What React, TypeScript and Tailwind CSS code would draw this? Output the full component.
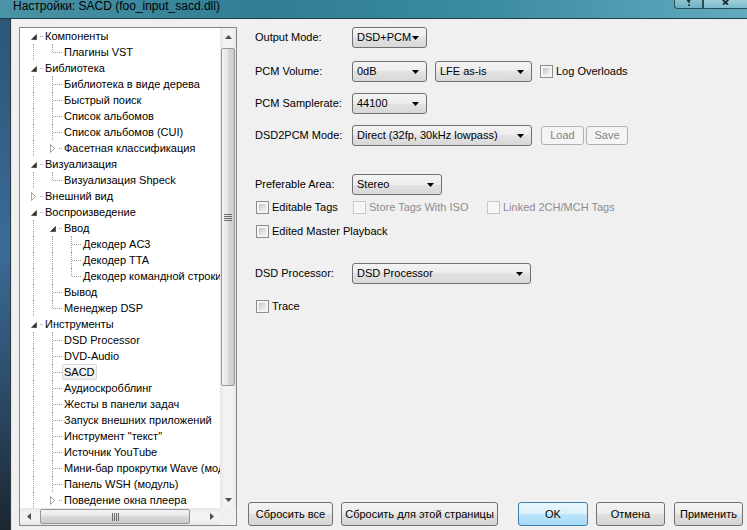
import React from 'react';

type Item = { t: string; l: number; e?: 'o' | 'c'; sel?: boolean };

const items: Item[] = [
  { t: 'Компоненты', l: 0, e: 'o' },
  { t: 'Плагины VST', l: 1 },
  { t: 'Библиотека', l: 0, e: 'o' },
  { t: 'Библиотека в виде дерева', l: 1 },
  { t: 'Быстрый поиск', l: 1 },
  { t: 'Список альбомов', l: 1 },
  { t: 'Список альбомов (CUI)', l: 1 },
  { t: 'Фасетная классификация', l: 1, e: 'c' },
  { t: 'Визуализация', l: 0, e: 'o' },
  { t: 'Визуализация Shpeck', l: 1 },
  { t: 'Внешний вид', l: 0, e: 'c' },
  { t: 'Воспроизведение', l: 0, e: 'o' },
  { t: 'Ввод', l: 1, e: 'o' },
  { t: 'Декодер AC3', l: 2 },
  { t: 'Декодер TTA', l: 2 },
  { t: 'Декодер командной строки', l: 2 },
  { t: 'Вывод', l: 1 },
  { t: 'Менеджер DSP', l: 1 },
  { t: 'Инструменты', l: 0, e: 'o' },
  { t: 'DSD Processor', l: 1 },
  { t: 'DVD-Audio', l: 1 },
  { t: 'SACD', l: 1, sel: true },
  { t: 'Аудиоскробблинг', l: 1 },
  { t: 'Жесты в панели задач', l: 1 },
  { t: 'Запуск внешних приложений', l: 1 },
  { t: 'Инструмент "текст"', l: 1 },
  { t: 'Источник YouTube', l: 1 },
  { t: 'Мини-бар прокрутки Wave (модуль)', l: 1 },
  { t: 'Панель WSH (модуль)', l: 1 },
  { t: 'Поведение окна плеера', l: 1, e: 'c' },
];

// rows scrolled out of view still have siblings below, so guide lines keep running
const hidden: Item[] = [
  { t: '', l: 1 },
  { t: '', l: 0 },
];
const all = [...items, ...hidden];

function hasNext(i: number, level: number) {
  for (let j = i + 1; j < all.length; j++) {
    if (all[j].l < level) return false;
    if (all[j].l === level) return true;
  }
  return false;
}

function Expander({ open }: { open: boolean }) {
  return (
    <div className="absolute left-[4px] top-0 bottom-0 flex w-[11px] items-center justify-center bg-white">
      {open ? (
        <svg width="6" height="6" viewBox="0 0 6 6" className="mt-[2px]">
          <path d="M5.5 0.5V5.5H0.5Z" fill="#333" stroke="#595959" strokeWidth="1" />
        </svg>
      ) : (
        <svg width="5" height="9" viewBox="0 0 5 9">
          <path d="M0.5 0.5L4.5 4.5L0.5 8.5Z" fill="#fff" stroke="#a6a6a6" strokeWidth="1" />
        </svg>
      )}
    </div>
  );
}

function TreeRow({ item, i }: { item: Item; i: number }) {
  const cols = [];
  for (let k = 0; k <= item.l; k++) {
    const own = k === item.l;
    const cont = hasNext(i, k);
    cols.push(
      <div key={k} className="relative h-full w-[19px] shrink-0">
        {own ? (
          <>
            <div className={`absolute left-[9px] top-0 w-0 border-l border-dotted border-[#a0a0a0] ${cont ? 'bottom-0' : 'h-[8px]'}`} />
            <div className="absolute left-[10px] right-0 top-[8px] h-0 border-t border-dotted border-[#a0a0a0]" />
            {item.e && <Expander open={item.e === 'o'} />}
          </>
        ) : cont ? (
          <div className="absolute left-[9px] top-0 bottom-0 w-0 border-l border-dotted border-[#a0a0a0]" />
        ) : null}
      </div>
    );
  }
  return (
    <div className="flex h-[16px] items-center whitespace-nowrap">
      {cols}
      <span
        className={`rounded-[2px] border px-[1px] leading-[14px] ${
          item.sel ? 'border-[#d9d9d9] bg-[linear-gradient(#fafafa,#ececec)]' : 'border-transparent'
        }`}
      >
        {item.t}
      </span>
    </div>
  );
}

function Gripper({ vertical }: { vertical: boolean }) {
  return vertical ? (
    <svg width="8" height="8" viewBox="0 0 8 8">
      <path d="M0 1.5H8M0 3.5H8M0 5.5H8M0 7.5H8" stroke="#6b6b6b" strokeWidth="1" />
    </svg>
  ) : (
    <svg width="8" height="8" viewBox="0 0 8 8">
      <path d="M1.5 0V8M3.5 0V8M5.5 0V8M7.5 0V8" stroke="#6b6b6b" strokeWidth="1" />
    </svg>
  );
}

function Tree() {
  return (
    <div className="flex h-[499px] w-[218px] flex-col border border-[#828790] bg-white text-[11px] text-black">
      <div className="flex h-[480px]">
        <div className="h-full w-[200px] overflow-hidden pl-[4px]">
          {all.map((it, i) => (
            <TreeRow key={i} item={it} i={i} />
          ))}
        </div>
        <div className="flex h-full w-[16px] flex-col bg-[linear-gradient(90deg,#e6e6e6,#f2f2f2_25%,#f2f2f2_75%,#e6e6e6)]">
          <div className="flex h-[17px] items-center justify-center">
            <svg width="7" height="4" viewBox="0 0 7 4">
              <path d="M0 4H7L3.5 0Z" fill="#4d4d4d" />
            </svg>
          </div>
          <div className="mx-[1px] mt-[3px] flex h-[338px] items-center justify-center rounded-[2px] border border-[#979797] bg-[linear-gradient(90deg,#f4f4f4,#e6e6e6_45%,#d6d6d6_55%,#cccccc)]">
            <Gripper vertical />
          </div>
          <div className="mt-auto flex h-[17px] items-center justify-center">
            <svg width="7" height="4" viewBox="0 0 7 4">
              <path d="M0 0H7L3.5 4Z" fill="#4d4d4d" />
            </svg>
          </div>
        </div>
      </div>
      <div className="flex h-[17px]">
        <div className="flex w-[200px] bg-[linear-gradient(#e6e6e6,#f2f2f2_25%,#f2f2f2_75%,#e6e6e6)]">
          <div className="flex w-[17px] items-center justify-center">
            <svg width="4" height="7" viewBox="0 0 4 7">
              <path d="M4 0V7L0 3.5Z" fill="#4d4d4d" />
            </svg>
          </div>
          <div className="my-[1px] ml-[3px] flex w-[150px] items-center justify-center rounded-[2px] border border-[#979797] bg-[linear-gradient(#f4f4f4,#e6e6e6_45%,#d6d6d6_55%,#cccccc)]">
            <Gripper vertical={false} />
          </div>
          <div className="ml-auto flex w-[17px] items-center justify-center">
            <svg width="4" height="7" viewBox="0 0 4 7">
              <path d="M0 0V7L4 3.5Z" fill="#4d4d4d" />
            </svg>
          </div>
        </div>
        <div className="w-[16px] bg-[#f0f0f0]" />
      </div>
    </div>
  );
}

function Caret() {
  return (
    <svg width="7" height="4" viewBox="0 0 7 4" className="shrink-0">
      <path d="M0 0H7L3.5 4Z" fill="#000" />
    </svg>
  );
}

function Select({ className, children }: { className: string; children: React.ReactNode }) {
  return (
    <div
      className={`flex h-[21px] shrink-0 items-center justify-between rounded-[3px] border border-[#707070] bg-[linear-gradient(#f3f3f3,#ececec_50%,#e2e2e2_50%,#d8d8d8)] pl-[4px] pr-[7px] ${className}`}
    >
      <span className="whitespace-nowrap">{children}</span>
      <Caret />
    </div>
  );
}

function Check({ label, disabled }: { label: string; disabled?: boolean }) {
  return (
    <div className="flex items-center">
      <div
        className={`h-[13px] w-[13px] shrink-0 border p-[2px] ${
          disabled ? 'border-[#c6c6c6] bg-[#f8f8f8]' : 'border-[#8e8f8f] bg-[#f4f4f4]'
        }`}
      >
        <div
          className={`h-full w-full ${
            disabled ? 'bg-[#f4f4f4]' : 'bg-[linear-gradient(135deg,#c4c4c4,#e3e3e3_60%,#f2f2f2)]'
          }`}
        />
      </div>
      <span className={`ml-[3px] whitespace-nowrap ${disabled ? 'text-[#8d8d8d]' : 'text-black'}`}>{label}</span>
    </div>
  );
}

function Row({ className, label, children }: { className: string; label: string; children: React.ReactNode }) {
  return (
    <div className={`flex h-[21px] items-center ${className}`}>
      <div className="w-[97px] shrink-0 whitespace-nowrap">{label}</div>
      {children}
    </div>
  );
}

function Btn({ className, children, primary }: { className: string; children: React.ReactNode; primary?: boolean }) {
  return (
    <div
      className={`flex h-[24px] shrink-0 items-center justify-center rounded-[3px] border whitespace-nowrap ${
        primary
          ? 'border-[#3c7fb1] bg-[linear-gradient(#eaf6fd,#d9f0fc_50%,#bee6fd_50%,#a7d9f5)]'
          : 'border-[#707070] bg-[linear-gradient(#f3f3f3,#ececec_50%,#e0e0e0_50%,#d4d4d4)]'
      } ${className}`}
    >
      {children}
    </div>
  );
}

export default function App() {
  return (
    <div className="flex h-[530px] w-[747px] flex-col overflow-hidden font-['Liberation_Sans',Arial,sans-serif] text-[11px] text-black">
      <div className="flex h-[19px] shrink-0 border-b border-[#1f3d47] bg-[linear-gradient(90deg,#4b93a6,#2f7e93_35%,#3b8ba1_65%,#62abbe)]">
        <div className="ml-[13px] text-[12px] leading-[13px] text-black">Настройки: SACD (foo_input_sacd.dll)</div>
        <div className="ml-auto flex h-[9px] items-end">
          <div className="flex h-[9px] w-[29px] items-start justify-center overflow-hidden rounded-bl-[4px] border border-t-0 border-[#284c58] bg-[linear-gradient(#8fc3d0,#6fb0c2)]">
            <svg width="6" height="7" viewBox="0 0 6 7">
              <path d="M1 0.5C3 1 4.5 0 4.5 -1.5M3 1V3" stroke="#1d2f36" strokeWidth="1.6" fill="none" />
              <rect x="2.2" y="4.3" width="1.7" height="1.7" fill="#1d2f36" />
            </svg>
          </div>
          <div className="flex h-[9px] w-[44px] items-start justify-center overflow-hidden border border-t-0 border-r-0 border-[#284c58] bg-[linear-gradient(#9fd0dc,#7cbccc)]">
            <svg width="11" height="5" viewBox="0 0 11 5">
              <path d="M1 -2L5.5 2.5L10 -2M3 4.5L5.5 2.5L8 4.5" stroke="#1d2f36" strokeWidth="1.8" fill="none" />
            </svg>
          </div>
        </div>
      </div>
      <div className="flex flex-1">
        <div className="w-[10px] bg-[linear-gradient(#2c5578,#3a6b97_45%,#2e4f6e_70%,#1c2630)]" />
        <div className="w-[1px] bg-[#2a3a42]" />
        <div className="w-[1px] bg-[#dfe3e6]" />
        <div className="flex flex-1 bg-[#f0f0f0]">
          <div className="pl-[7px] pt-[8px]">
            <Tree />
          </div>
          <div className="flex flex-1 flex-col pb-[4px] pl-[11px]">
            <div className="pl-[7px]">
              <Row className="mt-[8px]" label="Output Mode:">
                <Select className="w-[75px]">DSD+PCM</Select>
              </Row>
              <Row className="mt-[13px]" label="PCM Volume:">
                <Select className="w-[75px]">0dB</Select>
                <Select className="ml-[8px] w-[97px]">LFE as-is</Select>
                <div className="ml-[8px]">
                  <Check label="Log Overloads" />
                </div>
              </Row>
              <Row className="mt-[11px]" label="PCM Samplerate:">
                <Select className="w-[75px]">44100</Select>
              </Row>
              <Row className="mt-[11px]" label="DSD2PCM Mode:">
                <Select className="w-[180px]">Direct (32fp, 30kHz lowpass)</Select>
                <div className="ml-[9px] flex h-[19px] w-[43px] items-center justify-center rounded-[3px] border border-[#adb2b5] bg-[#f4f4f4] text-[#838383]">
                  Load
                </div>
                <div className="ml-[2px] flex h-[19px] w-[42px] items-center justify-center rounded-[3px] border border-[#adb2b5] bg-[#f4f4f4] text-[#838383]">
                  Save
                </div>
              </Row>
              <Row className="mt-[28px]" label="Preferable Area:">
                <Select className="w-[90px]">Stereo</Select>
              </Row>
              <div className="mt-[4px] flex h-[16px] items-center">
                <div className="w-[98px] pl-[1px]">
                  <Check label="Editable Tags" />
                </div>
                <div className="w-[134px]">
                  <Check label="Store Tags With ISO" disabled />
                </div>
                <Check label="Linked 2CH/MCH Tags" disabled />
              </div>
              <div className="mt-[8px] flex h-[16px] items-center pl-[1px]">
                <Check label="Edited Master Playback" />
              </div>
              <Row className="mt-[24px]" label="DSD Processor:">
                <Select className="w-[179px]">DSD Processor</Select>
              </Row>
              <div className="mt-[14px] flex h-[16px] items-center pl-[1px]">
                <Check label="Trace" />
              </div>
            </div>
            <div className="mt-auto flex">
              <Btn className="w-[85px]">Сбросить все</Btn>
              <Btn className="ml-[8px] w-[157px]">Сбросить для этой страницы</Btn>
              <Btn className="ml-[20px] w-[70px]" primary>
                OK
              </Btn>
              <Btn className="ml-[8px] w-[69px]">Отмена</Btn>
              <Btn className="ml-[9px] w-[69px]">Применить</Btn>
            </div>
          </div>
        </div>
      </div>
    </div>
  );
}
